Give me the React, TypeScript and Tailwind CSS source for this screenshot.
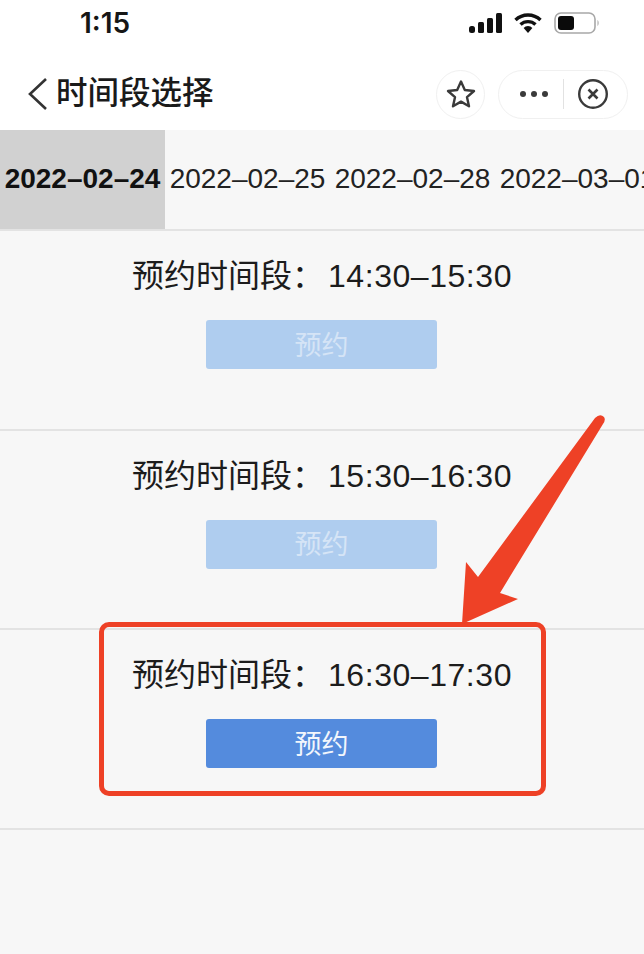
const FONT = "font-['Liberation_Sans','Noto_Sans_CJK_SC',sans-serif]";

const DATES = ["2022–02–24", "2022–02–25", "2022–02–28", "2022–03–01"];

const SLOTS = [
  { time: "14:30–15:30", enabled: false },
  { time: "15:30–16:30", enabled: false },
  { time: "16:30–17:30", enabled: true },
];

function StatusIcons() {
  return (
    <div className="flex items-center">
      <svg width="34" height="22" viewBox="0 0 34 22" className="text-[#111]">
        <rect x="0" y="14" width="6" height="7" rx="2.5" fill="currentColor" />
        <rect x="9" y="10" width="6" height="11" rx="1.5" fill="currentColor" />
        <rect x="18" y="6" width="6" height="15" rx="1.5" fill="currentColor" />
        <rect x="27" y="1" width="6" height="20" rx="1.5" fill="currentColor" />
      </svg>
      <svg width="28" height="22" viewBox="0 0 28 22" className="ml-[11px] text-[#111]">
        <path d="M1.5 8 A18 18 0 0 1 26.5 8" fill="none" stroke="currentColor" strokeWidth="3.4" />
        <path d="M6.5 12.6 A11 11 0 0 1 21.5 12.6" fill="none" stroke="currentColor" strokeWidth="3.4" />
        <path d="M9.6 16 A6 6 0 0 1 18.4 16 L14 21 Z" fill="currentColor" />
      </svg>
      <svg width="46" height="24" viewBox="0 0 46 24" className="ml-[12px]">
        <rect x="1" y="2" width="40" height="20" rx="6" fill="none" stroke="#a8a8a8" strokeWidth="1.6" />
        <rect x="4" y="5" width="16" height="14" rx="3" fill="#0a0a0a" />
        <path d="M43.5 9 C45 10 45 14 43.5 15 Z" fill="#a8a8a8" />
      </svg>
    </div>
  );
}

function SlotRow({ time, enabled }: { time: string; enabled: boolean }) {
  return (
    <div className="h-[199.5px] border-b-2 border-[#e3e3e3] flex flex-col items-center pt-[25px]">
      <p className="text-[32px] leading-[40px] text-[#1c1c1c] whitespace-nowrap">
        {"预约时间段\uFF1A"}
        <span className="ml-[4px] tracking-[0.55px]">{time}</span>
      </p>
      <button
        className={`mt-[24px] mr-[1px] w-[231px] h-[49px] pt-[3px] rounded-[3px] text-[27px] leading-none ${
          enabled ? "bg-[#548bdd] text-[#f2f6fc]" : "bg-[#afcdef] text-[#d5e4f6]"
        }`}
      >
        预约
      </button>
    </div>
  );
}

export default function App() {
  return (
    <div className={`${FONT} relative w-[644px] h-[954px] overflow-hidden bg-[#f7f7f7]`}>
      <div className="h-[130px] bg-white">
        <div className="h-[46px] flex items-center justify-between pl-[80px] pr-[44px]">
          <span className="font-['Inter',sans-serif] text-[28px] leading-none font-semibold text-[#161616]">1:15</span>
          <StatusIcons />
        </div>
        <div className="h-[84px] flex items-center justify-between pl-[26px] pr-[16px] pt-[12px]">
          <div className="flex items-center">
            <svg width="22" height="34" viewBox="0 0 22 34">
              <path d="M20 2 L4 17 L20 32" fill="none" stroke="#333" strokeWidth="2.6" />
            </svg>
            <h1 className="ml-[8px] text-[31.5px] leading-none font-medium text-[#1a1a1a]">时间段选择</h1>
          </div>
          <div className="flex items-center gap-[13px]">
            <div className="w-[49px] h-[49px] rounded-full border border-[#f0f0f0] flex items-center justify-center">
              <svg width="30" height="30" viewBox="0 0 30 30">
                <path
                  d="M15 2.5 L18.8 11 L28 12 L21 18.2 L23 27.3 L15 22.6 L7 27.3 L9 18.2 L2 12 L11.2 11 Z"
                  fill="none"
                  stroke="#3a3a3a"
                  strokeWidth="2.4"
                  strokeLinejoin="round"
                />
              </svg>
            </div>
            <div className="w-[130px] h-[49px] rounded-full border border-[#f0f0f0] flex items-center">
              <div className="w-[64px] flex justify-center gap-[5px] pl-[6px]">
                <span className="w-[6px] h-[6px] rounded-full bg-[#3a3a3a]" />
                <span className="w-[6px] h-[6px] rounded-full bg-[#3a3a3a]" />
                <span className="w-[6px] h-[6px] rounded-full bg-[#3a3a3a]" />
              </div>
              <div className="w-px h-[30px] bg-[#e2e2e2]" />
              <svg width="32" height="32" viewBox="0 0 32 32" className="ml-[13px]">
                <circle cx="16" cy="16" r="13.8" fill="none" stroke="#3a3a3a" strokeWidth="2.4" />
                <path d="M11.5 11.5 L20.5 20.5 M20.5 11.5 L11.5 20.5" stroke="#3a3a3a" strokeWidth="2.6" />
              </svg>
            </div>
          </div>
        </div>
      </div>

      <div className="h-[101px] flex overflow-hidden border-b-2 border-[#e3e3e3]">
        {DATES.map((date, i) => (
          <div
            key={date}
            className={`w-[165px] shrink-0 flex items-center justify-center pb-[2px] text-[28px] whitespace-nowrap ${
              i === 0 ? "bg-[#d1d1d1] font-bold text-[#111]" : "text-[#222]"
            }`}
          >
            {date}
          </div>
        ))}
      </div>

      {SLOTS.map((slot) => (
        <SlotRow key={slot.time} time={slot.time} enabled={slot.enabled} />
      ))}

      {/* red annotation drawn over the screenshot */}
      <div className="absolute left-[99px] top-[622px] w-[447px] h-[174px] rounded-[10px] border-[5px] border-[#ee4126]" />
      <svg className="absolute left-0 top-0" width="644" height="954" viewBox="0 0 644 954">
        <path
          d="M462 624 L466 562 L478 577 L595 418 Q600 413 604 417 Q606 420 603 424 L500 593 L518 599 Z"
          fill="#ee4126"
        />
      </svg>
    </div>
  );
}
